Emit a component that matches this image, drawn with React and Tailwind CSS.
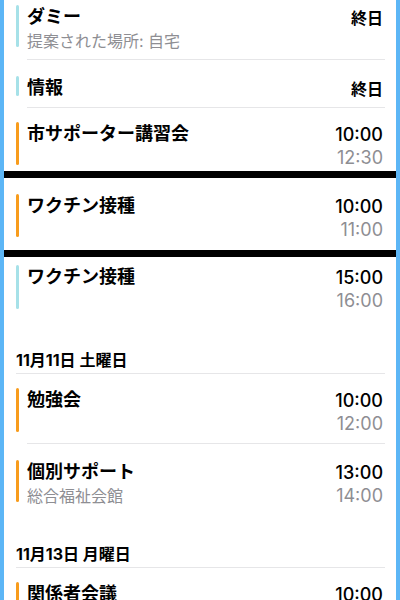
const FONT = { fontFamily: 'Inter, "Noto Sans CJK JP", sans-serif' };

const TEAL = 'bg-[#a6e1e8]';
const ORANGE = 'bg-[#f89c1c]';

function Sep() {
  return <div className="ml-[23px] mr-[11px] h-px bg-[#e6e6e8]" />;
}

function Bar() {
  return <div className="h-[7px] bg-black" />;
}

function EventRow({ title, sub, start, end, allDay, color, pt, pb, h }) {
  return (
    <div className={`pl-3 pr-[13px] ${pt} ${pb}`}>
      <div className={`flex items-stretch ${h}`}>
        <div className={`w-[3px] rounded-full ${color}`} />
        <div className="ml-2 flex-1 min-w-0 pt-[2px]">
          <div className="text-[18px] leading-[20px] font-bold text-black whitespace-nowrap">{title}</div>
          {sub && <div className="mt-[4px] text-[16px] leading-[20px] text-[#8e8e93] whitespace-nowrap">{sub}</div>}
        </div>
        <div className="text-right pt-[3px]">
          {allDay ? (
            <div className="text-[16px] leading-[20px] font-semibold text-black">終日</div>
          ) : (
            <>
              <div className="text-[18px] leading-[20px] font-medium text-black">{start}</div>
              <div className="mt-[3px] text-[18px] leading-[20px] text-[#8e8e93]">{end}</div>
            </>
          )}
        </div>
      </div>
    </div>
  );
}

function DateHeader({ label, pt }) {
  return (
    <div className={pt}>
      <div className="pl-3 h-[26px] pt-[3px] text-[16px] leading-[20px] font-bold text-black">{label}</div>
      <div className="ml-3 mr-[11px] h-px bg-[#e6e6e8]" />
    </div>
  );
}

export default function App() {
  return (
    <div style={FONT} className="h-[600px] overflow-hidden bg-white border-l-4 border-r-4 border-[#5cb6f6]">
      <EventRow title="ダミー" sub="提案された場所: 自宅" allDay color={TEAL} pt="pt-[5px]" pb="pb-[12px]" h="h-[42px]" />
      <Sep />
      <EventRow title="情報" allDay color={TEAL} pt="pt-[16px]" pb="pb-[11px]" h="h-[20px]" />
      <Sep />
      <EventRow title="市サポーター講習会" start="10:00" end="12:30" color={ORANGE} pt="pt-[14px]" pb="pb-[6px]" h="h-[43px]" />
      <Bar />
      <EventRow title="ワクチン接種" start="10:00" end="11:00" color={ORANGE} pt="pt-[16px]" pb="pb-[13px]" h="h-[43px]" />
      <Bar />
      <EventRow title="ワクチン接種" start="15:00" end="16:00" color={TEAL} pt="pt-[8px]" pb="pb-0" h="h-[44px]" />
      <DateHeader label="11月11日 土曜日" pt="pt-[38px]" />
      <EventRow title="勉強会" start="10:00" end="12:00" color={ORANGE} pt="pt-[14px]" pb="pb-[11px]" h="h-[44px]" />
      <Sep />
      <EventRow title="個別サポート" sub="総合福祉会館" start="13:00" end="14:00" color={ORANGE} pt="pt-[16px]" pb="pb-0" h="h-[42px]" />
      <DateHeader label="11月13日 月曜日" pt="pt-[39px]" />
      <EventRow title="関係者会議" start="10:00" end="11:00" color={ORANGE} pt="pt-[14px]" pb="pb-0" h="h-[43px]" />
    </div>
  );
}
